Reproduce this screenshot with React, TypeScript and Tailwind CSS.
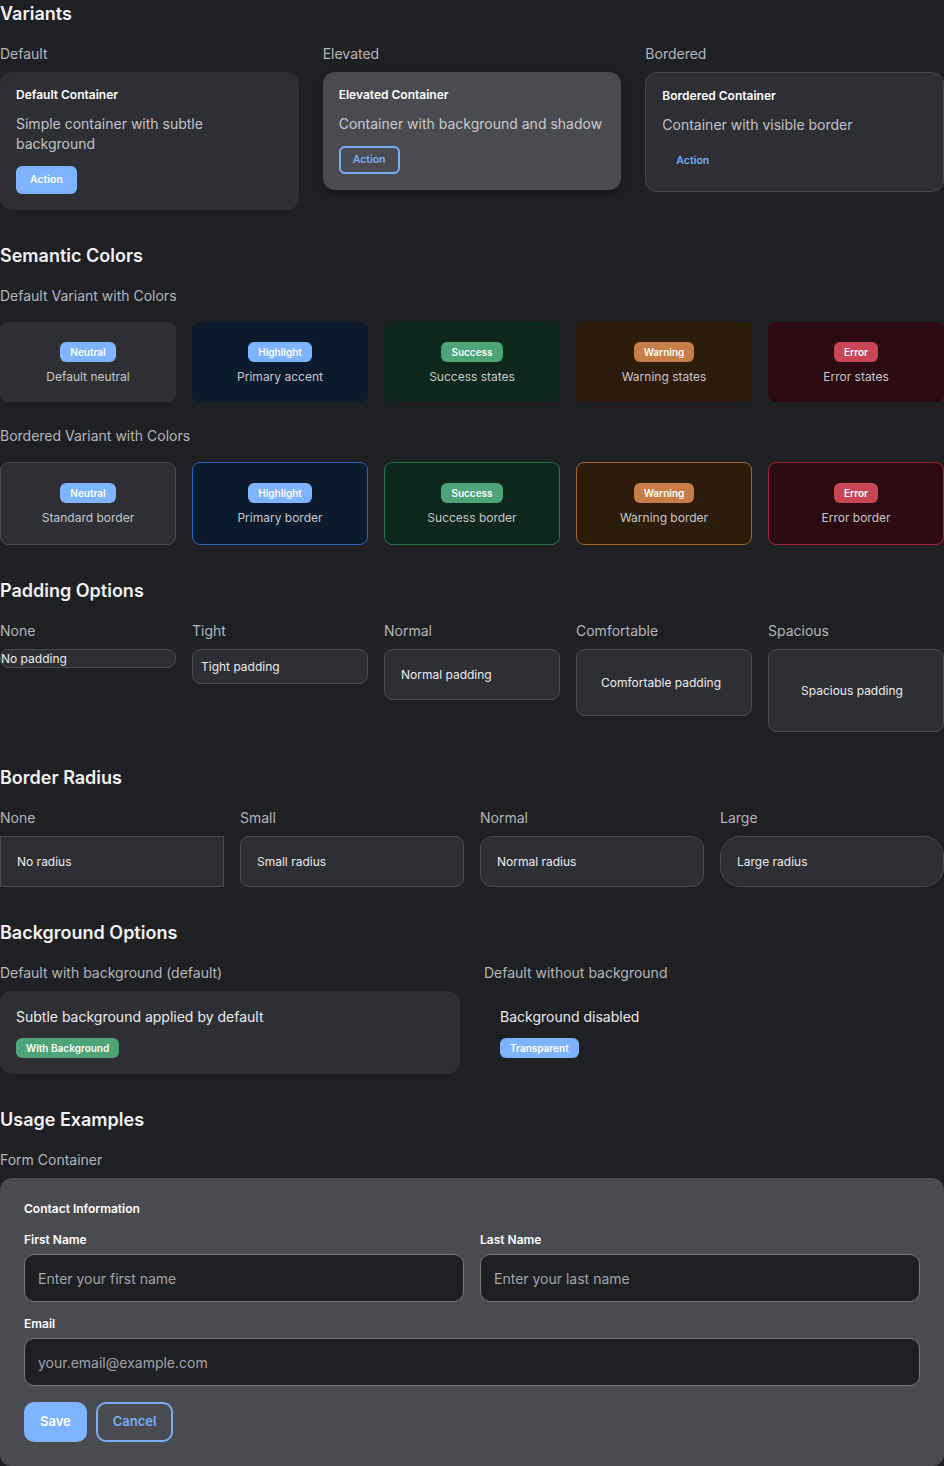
import React from "react";

const Heading = ({ children }: { children: React.ReactNode }) => (
  <h2 className="text-lg font-semibold leading-7 text-[#f2f2f4] mb-4">{children}</h2>
);

const Label = ({ children, className = "" }: { children: React.ReactNode; className?: string }) => (
  <div className={`text-sm leading-5 text-[#b5b6ba] ${className}`}>{children}</div>
);

const semantic = [
  { badge: "Neutral", badgeBg: "bg-[#7eb3ff]", bg: "bg-[#2e2f34]", border: "border-[#4a4b50]", text: "Default neutral", btext: "Standard border" },
  { badge: "Highlight", badgeBg: "bg-[#7eb3ff]", bg: "bg-[#0b1a2d]", border: "border-[#2d62c4]", text: "Primary accent", btext: "Primary border" },
  { badge: "Success", badgeBg: "bg-[#4ca477]", bg: "bg-[#0d271c]", border: "border-[#25714a]", text: "Success states", btext: "Success border" },
  { badge: "Warning", badgeBg: "bg-[#c97d46]", bg: "bg-[#2d1b0b]", border: "border-[#a2652a]", text: "Warning states", btext: "Warning border" },
  { badge: "Error", badgeBg: "bg-[#c84655]", bg: "bg-[#2b0a12]", border: "border-[#a3243a]", text: "Error states", btext: "Error border" },
];

const box = "border border-[#48494e] bg-[#2e2f34] text-xs leading-[17px] text-[#ececee]";

export default function App() {
  return (
    <div className="min-h-screen bg-[#1f2024] text-[#e8e8ea]" style={{ fontFamily: "Inter, 'Noto Sans', sans-serif" }}>
      {/* Variants */}
      <section className="mb-8">
        <Heading>Variants</Heading>
        <div className="grid grid-cols-3 gap-6 items-start">
          <div>
            <Label className="mb-2">Default</Label>
            <div className="rounded-xl bg-[#2e2f34] p-4 flex flex-col items-start">
              <div className="text-xs font-semibold leading-[14px] text-white mb-3">Default Container</div>
              <p className="text-sm leading-5 text-[#c3c4c8] mb-3">Simple container with subtle background</p>
              <button className="block h-7 px-[14px] rounded-md bg-[#7eb3ff] text-[10.5px] font-semibold text-white">Action</button>
            </div>
          </div>
          <div>
            <Label className="mb-2">Elevated</Label>
            <div className="rounded-xl bg-[#4a4b50] p-4 shadow-md shadow-black/25 flex flex-col items-start">
              <div className="text-xs font-semibold leading-[14px] text-white mb-3">Elevated Container</div>
              <p className="text-sm leading-5 text-[#c9cacd] mb-3">Container with background and shadow</p>
              <button className="block h-7 px-3 rounded-md border-2 border-[#78aef8] text-[10.5px] font-semibold text-[#78aef8]">Action</button>
            </div>
          </div>
          <div>
            <Label className="mb-2">Bordered</Label>
            <div className="rounded-xl bg-[#2e2f34] border border-[#48494e] p-4 flex flex-col items-start">
              <div className="text-xs font-semibold leading-[14px] text-white mb-3">Bordered Container</div>
              <p className="text-sm leading-5 text-[#c3c4c8] mb-3">Container with visible border</p>
              <button className="block h-7 px-[14px] rounded-md text-[10.5px] font-semibold text-[#78aef8]">Action</button>
            </div>
          </div>
        </div>
      </section>

      {/* Semantic Colors */}
      <section className="mb-8">
        <Heading>Semantic Colors</Heading>
        <Label className="mb-4">Default Variant with Colors</Label>
        <div className="grid grid-cols-5 gap-4 mb-6">
          {semantic.map((s) => (
            <div key={s.badge} className={`rounded-lg ${s.bg} pt-5 pb-4 flex flex-col items-center`}>
              <span className={`h-5 px-[10px] rounded-md ${s.badgeBg} text-[10px] font-semibold leading-5 text-white`}>{s.badge}</span>
              <span className="mt-[6px] text-xs leading-[18px] text-[#c6c7cb]">{s.text}</span>
            </div>
          ))}
        </div>
        <Label className="mb-4">Bordered Variant with Colors</Label>
        <div className="grid grid-cols-5 gap-4">
          {semantic.map((s) => (
            <div key={s.badge} className={`rounded-lg border ${s.border} ${s.bg} pt-5 pb-[17px] flex flex-col items-center`}>
              <span className={`h-5 px-[10px] rounded-md ${s.badgeBg} text-[10px] font-semibold leading-5 text-white`}>{s.badge}</span>
              <span className="mt-[6px] text-xs leading-[18px] text-[#c6c7cb]">{s.btext}</span>
            </div>
          ))}
        </div>
      </section>

      {/* Padding Options */}
      <section className="mb-8">
        <Heading>Padding Options</Heading>
        <div className="grid grid-cols-5 gap-4 items-start">
          <div>
            <Label className="mb-2">None</Label>
            <div className={`rounded-lg ${box}`}>No padding</div>
          </div>
          <div>
            <Label className="mb-2">Tight</Label>
            <div className={`rounded-lg p-2 ${box}`}>Tight padding</div>
          </div>
          <div>
            <Label className="mb-2">Normal</Label>
            <div className={`rounded-lg p-4 ${box}`}>Normal padding</div>
          </div>
          <div>
            <Label className="mb-2">Comfortable</Label>
            <div className={`rounded-lg p-6 ${box}`}>Comfortable padding</div>
          </div>
          <div>
            <Label className="mb-2">Spacious</Label>
            <div className={`rounded-lg p-8 ${box}`}>Spacious padding</div>
          </div>
        </div>
      </section>

      {/* Border Radius */}
      <section className="mb-8">
        <Heading>Border Radius</Heading>
        <div className="grid grid-cols-4 gap-4">
          <div>
            <Label className="mb-2">None</Label>
            <div className={`p-4 ${box}`}>No radius</div>
          </div>
          <div>
            <Label className="mb-2">Small</Label>
            <div className={`rounded-lg p-4 ${box}`}>Small radius</div>
          </div>
          <div>
            <Label className="mb-2">Normal</Label>
            <div className={`rounded-xl p-4 ${box}`}>Normal radius</div>
          </div>
          <div>
            <Label className="mb-2">Large</Label>
            <div className={`rounded-[20px] p-4 ${box}`}>Large radius</div>
          </div>
        </div>
      </section>

      {/* Background Options */}
      <section className="mb-8">
        <Heading>Background Options</Heading>
        <div className="grid grid-cols-2 gap-6">
          <div>
            <Label className="mb-2">Default with background (default)</Label>
            <div className="rounded-xl bg-[#2e2f34] p-4 flex flex-col items-start">
              <div className="text-sm leading-5 text-[#ececee] mb-[11px]">Subtle background applied by default</div>
              <span className="block h-5 px-[10px] rounded-md bg-[#4ca477] text-[10px] font-semibold leading-5 text-white">With Background</span>
            </div>
          </div>
          <div>
            <Label className="mb-2">Default without background</Label>
            <div className="rounded-xl p-4 flex flex-col items-start">
              <div className="text-sm leading-5 text-[#ececee] mb-[11px]">Background disabled</div>
              <span className="block h-5 px-[10px] rounded-md bg-[#7eb3ff] text-[10px] font-semibold leading-5 text-white">Transparent</span>
            </div>
          </div>
        </div>
      </section>

      {/* Usage Examples */}
      <section>
        <Heading>Usage Examples</Heading>
        <Label className="mb-2">Form Container</Label>
        <div className="rounded-xl bg-[#4a4b50] p-6">
          <div className="text-xs font-semibold leading-[14px] text-white mb-4">Contact Information</div>
          <div className="grid grid-cols-2 gap-4">
            <div>
              <div className="text-xs font-semibold leading-4 text-white mb-[6px]">First Name</div>
              <input
                placeholder="Enter your first name"
                className="block w-full h-12 rounded-[10px] border border-[#77787c] bg-[#1f2024] px-[13px] text-sm text-white placeholder:text-[#a3a4a8] outline-none"
              />
            </div>
            <div>
              <div className="text-xs font-semibold leading-4 text-white mb-[6px]">Last Name</div>
              <input
                placeholder="Enter your last name"
                className="block w-full h-12 rounded-[10px] border border-[#77787c] bg-[#1f2024] px-[13px] text-sm text-white placeholder:text-[#a3a4a8] outline-none"
              />
            </div>
          </div>
          <div className="mt-[14px]">
            <div className="text-xs font-semibold leading-4 text-white mb-[6px]">Email</div>
            <input
              placeholder="your.email@example.com"
              className="block w-full h-12 rounded-[10px] border border-[#77787c] bg-[#1f2024] px-[13px] text-sm text-white placeholder:text-[#a3a4a8] outline-none"
            />
          </div>
          <div className="mt-4 flex gap-[9px]">
            <button className="h-10 px-4 rounded-[10px] bg-[#7eb3ff] text-[13px] font-semibold text-white">Save</button>
            <button className="h-10 px-[15px] rounded-[10px] border-2 border-[#78aef8] text-[13px] font-semibold text-[#78aef8]">Cancel</button>
          </div>
        </div>
      </section>
    </div>
  );
}
